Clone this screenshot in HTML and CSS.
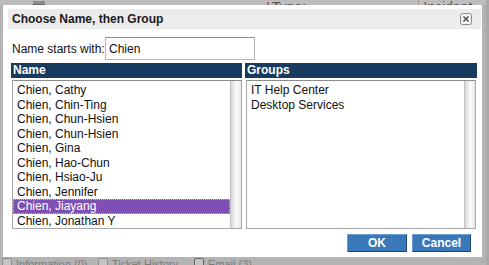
FILE: index.html
```html
<!DOCTYPE html>
<html lang="en">
<head>
  <meta charset="UTF-8" />
  <title>Choose Name, then Group</title>
  <link rel="stylesheet" href="styles.css">
</head>
<body>
  <div class="page">
    <div class="page-top">
      <span class="select-arrow"></span>
      <span class="field-label"><i class="req"></i>Type:</span>
      <span class="field-value">Incident</span>
    </div>
    <div class="page-bottom">
      <span class="check"></span><span class="check-label">Information (0)</span>
      <span class="check"></span><span class="check-label">Ticket History (12)</span>
      <span class="check checked"></span><span class="check-label">Email (3)</span>
    </div>
  </div>

  <div class="dialog">
    <div class="dialog-title">
      <span>Choose Name, then Group</span>
      <button class="close" title="Close">
        <svg width="12" height="12" viewBox="0 0 12 12">
          <rect x="0.5" y="0.5" width="11" height="11" rx="2" fill="#f2f2f2" stroke="#8a8a8a" />
          <path d="M3.5 3.5 L8.5 8.5 M8.5 3.5 L3.5 8.5" stroke="#555" stroke-width="1.6" />
        </svg>
      </button>
    </div>

    <div class="search-row">
      <label for="nameStart">Name starts with:</label>
      <input type="text" id="nameStart" value="Chien" />
    </div>

    <div class="panels">
      <div class="panel">
        <div class="panel-head">Name</div>
        <div class="list">
          <ul>
            <li>Chien, Cathy</li>
            <li>Chien, Chin-Ting</li>
            <li>Chien, Chun-Hsien</li>
            <li>Chien, Chun-Hsien</li>
            <li>Chien, Gina</li>
            <li>Chien, Hao-Chun</li>
            <li>Chien, Hsiao-Ju</li>
            <li>Chien, Jennifer</li>
            <li class="selected">Chien, Jiayang</li>
            <li>Chien, Jonathan Y</li>
          </ul>
          <div class="scroll"></div>
        </div>
      </div>
      <div class="panel">
        <div class="panel-head">Groups</div>
        <div class="list">
          <ul>
            <li>IT Help Center</li>
            <li>Desktop Services</li>
          </ul>
          <div class="scroll"></div>
        </div>
      </div>
    </div>

    <div class="actions">
      <button class="btn btn-ok">OK</button>
      <button class="btn btn-cancel">Cancel</button>
    </div>
  </div>
</body>
</html>
```

FILE: styles.css
```css
* {
  box-sizing: border-box;
}

body {
  margin: 0;
  width: 489px;
  height: 265px;
  overflow: hidden;
  background: #b3b3b3;
  font-family: 'Liberation Sans', Arial, sans-serif;
  font-size: 12px;
  color: #111;
}

/* page behind the dialog */
.page {
  height: 265px;
  display: flex;
  flex-direction: column;
  justify-content: space-between;
  border-right: 3px solid #a9a9a9;
}

.page-top {
  height: 5px;
  display: flex;
  align-items: flex-end;
  position: relative;
  overflow: hidden;
  background: #bdbdbd;
}

.select-arrow {
  width: 12px;
  height: 4px;
  margin-left: 33px;
  background: #8e8e8e;
  border-bottom: 1px solid #6a6a6a;
}

.field-label,
.field-value {
  font-size: 14px;
  line-height: 14px;
  margin-bottom: -9px;
  color: #555;
}

.field-label {
  margin-left: 222px;
}

.req {
  display: inline-block;
  width: 2px;
  height: 10px;
  margin-right: 3px;
  background: #b76a6a;
}

.field-value {
  margin-left: 112px;
  padding-left: 4px;
  border-left: 1px solid #9a9a9a;
}

.page-bottom {
  height: 8px;
  display: flex;
  align-items: flex-start;
  padding-left: 2px;
  gap: 4px;
  overflow: hidden;
  color: #7a7a7a;
  font-size: 11px;
  line-height: 11px;
}

.check {
  width: 10px;
  height: 10px;
  margin-top: 1px;
  border: 1px solid #8a8a8a;
  border-radius: 2px;
  background: #c4c4c4;
}

.check.checked {
  border-color: #666;
}

.check-label {
  width: 78px;
  margin-top: 2px;
}

/* dialog */
.dialog {
  position: absolute;
  left: 3px;
  top: 5px;
  width: 479px;
  height: 252px;
  padding: 4px 1px 0 5px;
  background: #fff;
}

.dialog-title {
  height: 20px;
  display: flex;
  align-items: center;
  justify-content: space-between;
  padding: 0 9px 0 4px;
  background: #ececec;
  font-weight: bold;
  color: #1a1a1a;
}

.close {
  width: 12px;
  height: 12px;
  padding: 0;
  border: none;
  background: none;
  display: flex;
}

.search-row {
  margin-top: 8px;
  padding-left: 4px;
  display: flex;
  align-items: center;
}

.search-row label {
  width: 93px;
  white-space: nowrap;
}

.search-row input {
  width: 150px;
  height: 23px;
  padding: 0 3px;
  border: 1px solid #b5b5b5;
  border-top-color: #8f8f8f;
  font-family: inherit;
  font-size: 12px;
  color: #111;
}

.panels {
  margin-top: 3px;
  margin-left: 3px;
  display: grid;
  grid-template-columns: 231px 232px;
  gap: 3px;
}

.panel-head {
  height: 15px;
  line-height: 15px;
  padding-left: 2px;
  background: #173a5e;
  color: #fff;
  font-weight: bold;
}

.list {
  height: 149px;
  margin: 2px 0 0 1px;
  display: flex;
  border: 1px solid #a8a8a8;
  border-top-color: #8c8c8c;
}

.panel:last-child .list {
  margin-right: 1px;
}

.list ul {
  flex: 1;
  margin: 0;
  padding: 2px 0 0;
  list-style: none;
}

.list li {
  height: 14.5px;
  line-height: 14.5px;
  padding-left: 4px;
  white-space: nowrap;
}

.list li.selected {
  background: #7f50b4;
  color: #fff;
  outline: 1px dotted #c8b6e2;
  outline-offset: -1px;
}

.scroll {
  width: 11px;
  border-left: 1px solid #c2c2c2;
  background: linear-gradient(to right, #d6d6d6 0, #ececec 3px, #fbfbfb 6px, #e6e6e6 100%);
}

.actions {
  margin-top: 5px;
  padding-right: 10px;
  display: flex;
  justify-content: flex-end;
  gap: 5px;
}

.btn {
  height: 18px;
  padding: 0;
  background: #3a78ba;
  color: #fff;
  font-family: inherit;
  font-size: 12px;
  font-weight: bold;
  border: 1px solid;
  border-color: #6b9dd1 #1c4877 #1c4877 #6b9dd1;
  cursor: pointer;
}

.btn-ok {
  width: 60px;
}

.btn-cancel {
  width: 59px;
}
```
